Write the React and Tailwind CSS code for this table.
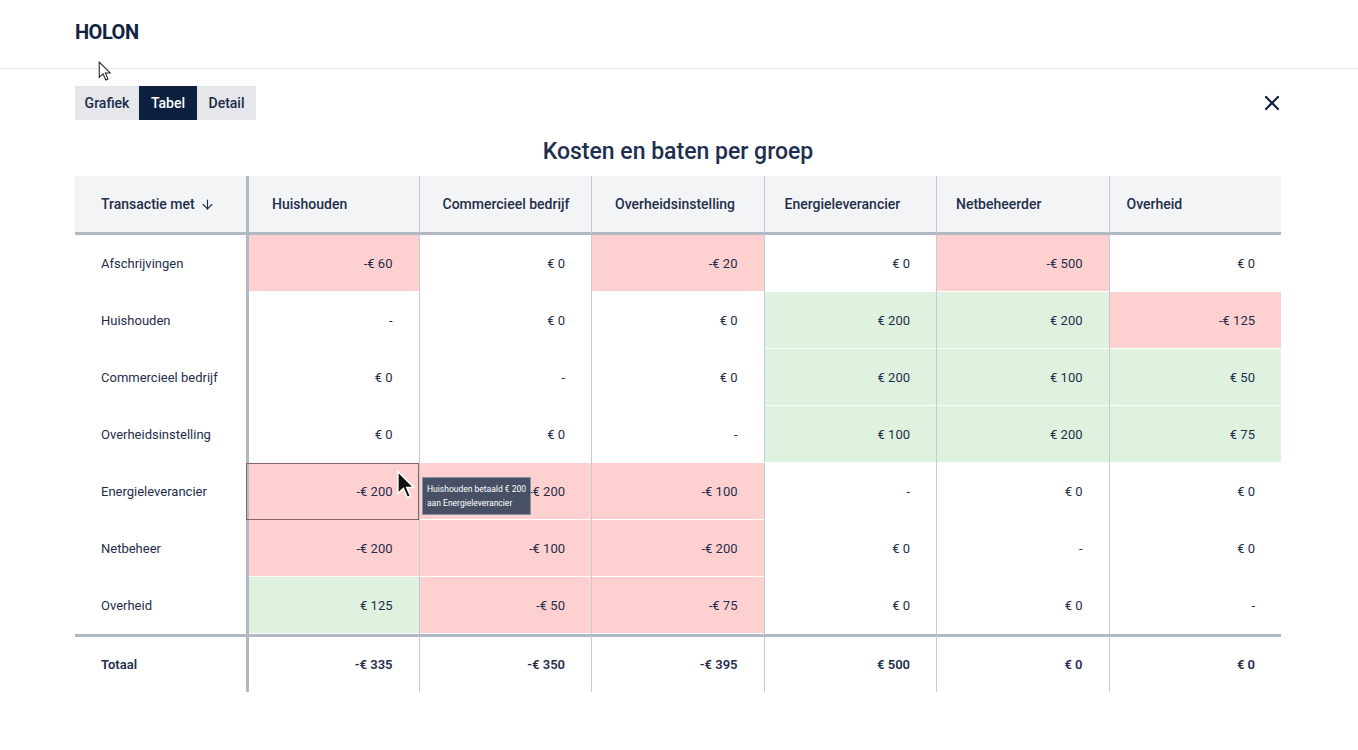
import { ArrowDown, X } from 'lucide-react';

const columns = [
  { name: 'Huishouden', pl: 'pl-[23px]' },
  { name: 'Commercieel bedrijf', pl: 'pl-[23px]' },
  { name: 'Overheidsinstelling', pl: 'pl-[23px]' },
  { name: 'Energieleverancier', pl: 'pl-[20px]' },
  { name: 'Netbeheerder', pl: 'pl-[19px]' },
  { name: 'Overheid', pl: 'pl-[17px]' },
];

// r = kosten (rood), g = baten (groen)
const rows = [
  { label: 'Afschrijvingen', cells: [['-€ 60', 'r'], ['€ 0'], ['-€ 20', 'r'], ['€ 0'], ['-€ 500', 'r'], ['€ 0']] },
  { label: 'Huishouden', cells: [['-'], ['€ 0'], ['€ 0'], ['€ 200', 'g'], ['€ 200', 'g'], ['-€ 125', 'r']] },
  { label: 'Commercieel bedrijf', cells: [['€ 0'], ['-'], ['€ 0'], ['€ 200', 'g'], ['€ 100', 'g'], ['€ 50', 'g']] },
  { label: 'Overheidsinstelling', cells: [['€ 0'], ['€ 0'], ['-'], ['€ 100', 'g'], ['€ 200', 'g'], ['€ 75', 'g']] },
  { label: 'Energieleverancier', cells: [['-€ 200', 'r', true], ['-€ 200', 'r'], ['-€ 100', 'r'], ['-'], ['€ 0'], ['€ 0']] },
  { label: 'Netbeheer', cells: [['-€ 200', 'r'], ['-€ 100', 'r'], ['-€ 200', 'r'], ['€ 0'], ['-'], ['€ 0']] },
  { label: 'Overheid', cells: [['€ 125', 'g'], ['-€ 50', 'r'], ['-€ 75', 'r'], ['€ 0'], ['€ 0'], ['-']] },
];

const totals = ['-€ 335', '-€ 350', '-€ 395', '€ 500', '€ 0', '€ 0'];

function colBorder(i) {
  return i === 0 ? 'border-l-[3px] border-[#b1b9c5]' : 'border-l border-[#c5cbd4]';
}

function CursorArrow({ className }) {
  return (
    <svg className={className} viewBox="0 0 12 19" fill="none">
      <path d="M1 1 L1 15.5 L4.6 12.2 L7.2 18 L9.3 17.1 L6.8 11.4 L11.4 11.4 Z" />
    </svg>
  );
}

export default function App() {
  return (
    <div className="min-h-screen bg-white text-[#1f2e4b] relative" style={{ fontFamily: 'Roboto, "Noto Sans", sans-serif' }}>
      {/* Top bar */}
      <header className="h-[69px] border-b border-[#e9ebee] pl-[75px] pr-[77px] flex items-center">
        <span className="text-[20px] font-bold tracking-tight text-[#10223f] -mt-[5px]">HOLON</span>
      </header>

      <div className="pl-[75px] pr-[77px] pt-[17px]">
        {/* Tabs + close */}
        <div className="flex items-center justify-between">
          <div className="flex h-[34px] text-[14px] font-medium">
            <button className="w-[64px] bg-[#e5e7eb] text-[#1c2b4a]">Grafiek</button>
            <button className="w-[58px] bg-[#0c1f3f] text-white">Tabel</button>
            <button className="w-[59px] bg-[#e5e7eb] text-[#1c2b4a]">Detail</button>
          </div>
          <X className="w-[24px] h-[24px] text-[#10223f] -mr-[3px]" strokeWidth={2.2} />
        </div>

        <h2 className="mt-[18px] text-center text-[23px] leading-[28px] font-medium text-[#1e2f4f]">Kosten en baten per groep</h2>

        {/* Table */}
        <div className="mt-[10px] grid grid-cols-[171px_repeat(6,minmax(0,1fr))] text-[13px]">
          {/* Header row */}
          <div className="h-[59px] bg-[#f3f4f6] border-b-[3px] border-[#b1b9c5] flex items-center pl-[26px] font-medium text-[14px] gap-[5px]">
            Transactie met <ArrowDown className="w-[15px] h-[15px]" strokeWidth={1.8} />
          </div>
          {columns.map((c, i) => (
            <div key={c.name} className={`h-[59px] bg-[#f3f4f6] border-b-[3px] border-b-[#b1b9c5] ${colBorder(i)} ${c.pl} flex items-center font-medium text-[14px]`}>
              {c.name}
            </div>
          ))}

          {/* Body rows */}
          {rows.map((row) => (
            <div key={row.label} className="contents">
              <div className="h-[57px] flex items-center pl-[26px]">{row.label}</div>
              {row.cells.map(([v, kind, active], ci) => (
                <div
                  key={ci}
                  className={`h-[57px] ${colBorder(ci)} flex items-center justify-end pr-[26px] ${
                    kind === 'r' ? 'bg-[#ffd0d0]' : kind === 'g' ? 'bg-[#dff2df]' : 'bg-white'
                  } shadow-[inset_0_-1px_0_0_#ffffff] ${active ? 'outline outline-1 -outline-offset-1 outline-[#8a6464]' : ''}`}
                >
                  {v}
                </div>
              ))}
            </div>
          ))}

          {/* Totals */}
          <div className="h-[58px] border-t-[3px] border-[#b1b9c5] flex items-center pl-[26px] font-semibold">Totaal</div>
          {totals.map((t, i) => (
            <div key={i} className={`h-[58px] border-t-[3px] border-t-[#b1b9c5] ${colBorder(i)} flex items-center justify-end pr-[26px] font-semibold`}>
              {t}
            </div>
          ))}
        </div>
      </div>

      {/* Tooltip */}
      <div className="absolute left-[422px] top-[477px] px-[4px] py-[4px] bg-[#334158]/90 border border-[#8692a6] text-white text-[8.5px] leading-[14px] whitespace-nowrap">
        Huishouden betaald € 200
        <br />
        aan Energieleverancier
      </div>

      {/* Cursors */}
      <CursorArrow className="absolute left-[396px] top-[470px] w-[19px] h-[29px] fill-[#111] stroke-white" />
      <CursorArrow className="absolute left-[98px] top-[61px] w-[13px] h-[20px] fill-white stroke-[#222]" />
    </div>
  );
}
